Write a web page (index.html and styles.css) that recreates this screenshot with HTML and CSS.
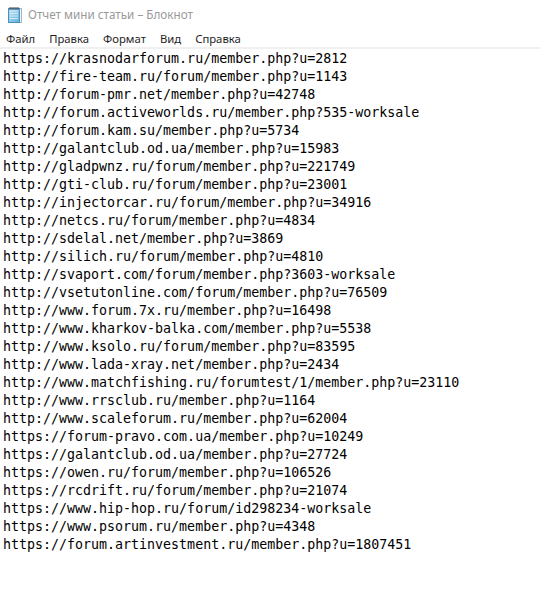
FILE: index.html
```html
<!DOCTYPE html>
<html lang="ru">
<head>
<meta charset="utf-8">
<title>Отчет мини статьи – Блокнот</title>
<link rel="stylesheet" href="styles.css">
</head>
<body>
<div class="window">
  <div class="titlebar">
    <svg class="app-icon" width="16" height="18" viewBox="0 0 16 18">
      <defs>
        <linearGradient id="pg" x1="0" y1="0" x2="1" y2="1">
          <stop offset="0" stop-color="#bfe3f5"/>
          <stop offset="1" stop-color="#5fb0dd"/>
        </linearGradient>
      </defs>
      <rect x="3.5" y="2.5" width="11" height="14" fill="#f4f9fc" stroke="#9fb6c4"/>
      <rect x="1.5" y="2.5" width="11" height="14" fill="url(#pg)" stroke="#4a8fbf"/>
      <path d="M3 5h8M3 7.5h8M3 10h8M3 12.5h8" stroke="#e6f4fb" stroke-width="0.8"/>
      <path d="M3 1v3M5 1v3M7 1v3M9 1v3M11 1v3" stroke="#3a4a57" stroke-width="1"/>
    </svg>
    <span class="title">Отчет мини статьи – Блокнот</span>
  </div>
  <nav class="menubar">
    <span class="menu-item">Файл</span>
    <span class="menu-item">Правка</span>
    <span class="menu-item">Формат</span>
    <span class="menu-item">Вид</span>
    <span class="menu-item">Справка</span>
  </nav>
  <pre class="editor">https://krasnodarforum.ru/member.php?u=2812
http://fire-team.ru/forum/member.php?u=1143
http://forum-pmr.net/member.php?u=42748
http://forum.activeworlds.ru/member.php?535-worksale
http://forum.kam.su/member.php?u=5734
http://galantclub.od.ua/member.php?u=15983
http://gladpwnz.ru/forum/member.php?u=221749
http://gti-club.ru/forum/member.php?u=23001
http://injectorcar.ru/forum/member.php?u=34916
http://netcs.ru/forum/member.php?u=4834
http://sdelal.net/member.php?u=3869
http://silich.ru/forum/member.php?u=4810
http://svaport.com/forum/member.php?3603-worksale
http://vsetutonline.com/forum/member.php?u=76509
http://www.forum.7x.ru/member.php?u=16498
http://www.kharkov-balka.com/member.php?u=5538
http://www.ksolo.ru/forum/member.php?u=83595
http://www.lada-xray.net/member.php?u=2434
http://www.matchfishing.ru/forumtest/1/member.php?u=23110
http://www.rrsclub.ru/member.php?u=1164
http://www.scaleforum.ru/member.php?u=62004
https://forum-pravo.com.ua/member.php?u=10249
https://galantclub.od.ua/member.php?u=27724
https://owen.ru/forum/member.php?u=106526
https://rcdrift.ru/forum/member.php?u=21074
https://www.hip-hop.ru/forum/id298234-worksale
https://www.psorum.ru/member.php?u=4348
https://forum.artinvestment.ru/member.php?u=1807451</pre>
</div>
</body>
</html>
```

FILE: styles.css
```css
html, body {
  margin: 0;
  padding: 0;
  background: #ffffff;
}

.window {
  width: 540px;
  height: 606px;
  display: flex;
  flex-direction: column;
  background: #ffffff;
  overflow: hidden;
}

.titlebar {
  height: 30px;
  display: flex;
  align-items: center;
  padding-left: 7px;
  box-sizing: border-box;
}

.app-icon {
  display: block;
  margin-top: -1px;
}

.title {
  margin-left: 5px;
  font-family: "Noto Sans", "Open Sans", sans-serif;
  font-size: 11.7px;
  color: #999999;
  margin-top: -2px;
}

.menubar {
  height: 17px;
  display: flex;
  align-items: center;
  padding-left: 0;
  border-bottom: 2px solid #f0f0f0;
  font-family: "Noto Sans", "Open Sans", sans-serif;
  font-size: 11.3px;
  color: #1e1e1e;
}

.menu-item {
  padding: 0 7px 0 6px;
  margin-right: 1px;
  line-height: 17px;
}

.editor {
  margin: 0;
  padding: 1px 0 0 3px;
  font-family: "DejaVu Sans Mono", "Liberation Mono", monospace;
  font-size: 13.3px;
  line-height: 18px;
  color: #000000;
}
```
